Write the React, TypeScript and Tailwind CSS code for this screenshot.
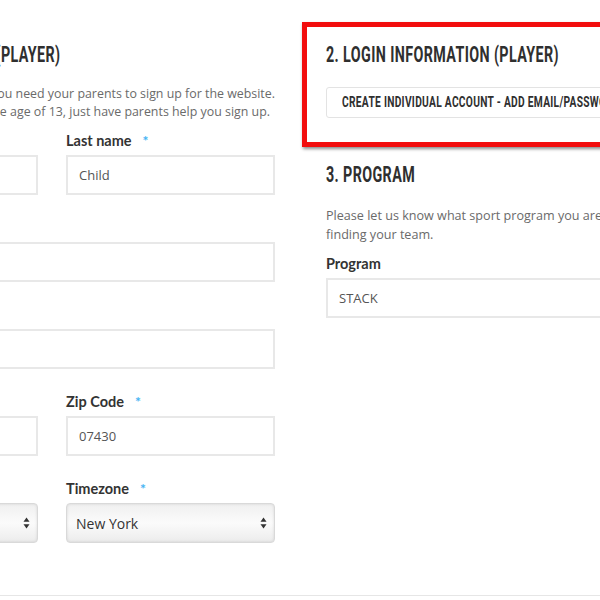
import type { ReactNode } from 'react'

const display = "font-['Roboto','DejaVu_Sans',sans-serif] font-bold"
const heading = `${display} inline-block text-[22px] leading-[28px] text-[#2f2f2f] tracking-[0.6px] whitespace-nowrap scale-x-[0.65]`
const body = "font-['Open_Sans','Lato',sans-serif]"
const labelFont = "font-['Lato','Open_Sans',sans-serif]"

function Label({ children, required }: { children: ReactNode; required?: boolean }) {
  return (
    <div className={`${labelFont} flex h-[20px] items-center text-[14.5px] font-bold text-[#333] whitespace-nowrap`}>
      {children}
      {required && <span className="ml-[11px] -mt-[2px] text-[14px] text-[#45b3f3]">*</span>}
    </div>
  )
}

function TextInput({ value = '' }: { value?: string }) {
  return (
    <input
      readOnly
      value={value}
      className={`${body} mt-[4px] block h-[40px] w-full border-2 border-[#e8e8e8] bg-white px-[11px] text-[13px] text-[#555] outline-none`}
    />
  )
}

function Arrows() {
  return (
    <svg width="7" height="12" viewBox="0 0 7 12" className="pointer-events-none absolute right-[8px] top-[14px]">
      <path d="M3.5 0.5 L6.5 4.8 L0.5 4.8 Z" fill="#333" />
      <path d="M3.5 11.5 L6.5 7.2 L0.5 7.2 Z" fill="#333" />
    </svg>
  )
}

function Select({ value }: { value: string }) {
  return (
    <div className="relative mt-[4px] h-[40px]">
      <div
        className={`${body} flex h-full items-center rounded-[4px] border border-[#d9d9d9] bg-gradient-to-b from-[#f0f0f0] via-[#fbfbfb] to-[#ececec] px-[9px] text-[14px] text-[#333] shadow-[inset_0_0_3px_rgba(0,0,0,0.12)]`}
      >
        {value}
      </div>
      <Arrows />
    </div>
  )
}

function Field({ label, value, required }: { label: string; value?: string; required?: boolean }) {
  return (
    <div>
      <Label required={required}>{label}</Label>
      <TextInput value={value} />
    </div>
  )
}

export default function App() {
  return (
    <div className="relative h-[600px] w-[600px] overflow-hidden bg-white">
      <div className="flex ml-[-171px] pt-[22px]">
        {/* 1. personal information */}
        <div className="w-[446px] shrink-0 pt-[19px]">
          <div className="flex w-[231px] justify-end">
            <h2 className={`${heading} origin-right`}>1. PERSONAL INFORMATION (PLAYER)</h2>
          </div>
          <div className={`${body} mt-[16px] flex w-[446px] flex-col items-end text-[12.4px] leading-[18px] text-[#6a6a6a] whitespace-nowrap`}>
            <p>If you are under the age of 13, you need your parents to sign up for the website.</p>
            <p className="pr-[5px]">If you are over the age of 13, just have parents help you sign up.</p>
          </div>

          <div className="mt-[10px] grid grid-cols-2 gap-x-[28px]">
            <Field label="First name" value="Test" required />
            <Field label="Last name" value="Child" required />
          </div>
          <div className="mt-[23px]">
            <Field label="Email" />
          </div>
          <div className="mt-[23px]">
            <Field label="Address" />
          </div>
          <div className="mt-[23px] grid grid-cols-2 gap-x-[28px]">
            <Field label="City" />
            <Field label="Zip Code" value="07430" required />
          </div>
          <div className="mt-[23px] grid grid-cols-2 gap-x-[28px]">
            <div>
              <Label required>State</Label>
              <Select value="New Jersey" />
            </div>
            <div>
              <Label required>Timezone</Label>
              <Select value="New York" />
            </div>
          </div>
        </div>

        {/* right column */}
        <div className="ml-[51px] w-[446px] shrink-0">
          <div className="-ml-[24px] border-[5px] border-[#f20d0d] pb-[24px] pl-[19px] pt-[14px] shadow-[1px_2px_3px_rgba(0,0,0,0.45)]">
            <h2 className={`${heading} origin-left`}>2. LOGIN INFORMATION (PLAYER)</h2>
            <button
              type="button"
              className="mt-[18px] flex h-[31px] w-[420px] items-center rounded-[3px] border border-[#e3e3e3] bg-white px-[15px]"
            >
              <span className={`${display} inline-block origin-left scale-x-[0.73] text-[14px] tracking-[0.4px] text-[#2f2f2f] whitespace-nowrap`}>
                CREATE INDIVIDUAL ACCOUNT - ADD EMAIL/PASSWORD
              </span>
            </button>
          </div>

          <div className="mt-[14px]">
            <h2 className={`${heading} origin-left`}>3. PROGRAM</h2>
          </div>
          <div className={`${body} mt-[17px] text-[12.6px] leading-[19px] text-[#6a6a6a]`}>
            <p className="whitespace-nowrap">Please let us know what sport program you are participating in to help</p>
            <p>finding your team.</p>
          </div>
          <div className="mt-[10px]">
            <Label>Program</Label>
            <TextInput value="STACK" />
          </div>
        </div>
      </div>

      <div className="absolute left-0 right-0 top-[595px] border-t border-[#e6e6e6]" />
    </div>
  )
}
